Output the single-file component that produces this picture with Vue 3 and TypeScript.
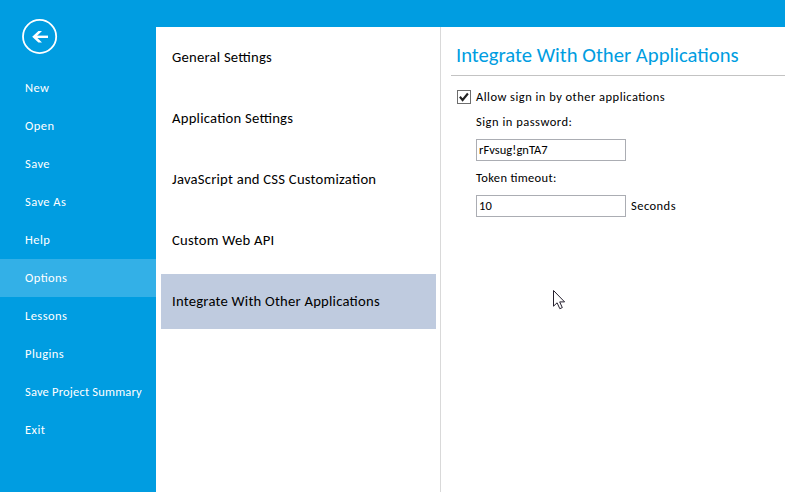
<script setup lang="ts">
import { ref } from 'vue'

const menu: string[] = ['New', 'Open', 'Save', 'Save As', 'Help', 'Options', 'Lessons', 'Plugins', 'Save Project Summary', 'Exit']
const sections: string[] = [
  'General Settings',
  'Application Settings',
  'JavaScript and CSS Customization',
  'Custom Web API',
  'Integrate With Other Applications',
]
const activeMenu = ref('Options')
const activeSection = ref('Integrate With Other Applications')
const allowSignIn = ref(true)
const password = ref('rFvsug!gnTA7')
const timeout = ref('10')
</script>

<template>
  <div class="window">
    <aside class="sidebar">
      <button class="back" aria-label="Back">
        <svg width="36" height="36" viewBox="0 0 36 36" fill="none" stroke="#fff">
          <circle cx="17.6" cy="17.5" r="16.6" stroke-width="1.8" />
          <path d="M26 17.8H12" stroke-width="2.4" />
          <path d="M10.2 17.8L16.4 12H20L14.2 17.8L20 23.6H16.4Z" fill="#fff" stroke="none" />
        </svg>
      </button>
      <nav>
        <a v-for="item in menu" :key="item" class="menu-item" :class="{ active: item === activeMenu, long: item.length > 12 }" @click="activeMenu = item"><span>{{ item }}</span></a>
      </nav>
    </aside>
    <main class="content">
      <nav class="sections">
        <a v-for="item in sections" :key="item" class="section" :class="{ active: item === activeSection }" @click="activeSection = item"><span>{{ item }}</span></a>
      </nav>
      <section class="panel">
        <h1><span>Integrate With Other Applications</span></h1>
        <div class="form">
          <label class="check-row">
            <input v-model="allowSignIn" class="native" type="checkbox" />
            <span class="box">
              <svg v-if="allowSignIn" width="12" height="12" viewBox="0 0 12 12"><path d="M1.9 5.8L4.6 9L9.9 2.5" fill="none" stroke="#222" stroke-width="2.1" /></svg>
            </span>
            <span class="label">Allow sign in by other applications</span>
          </label>
          <div class="fields">
            <label class="caption" for="password">Sign in password:</label>
            <input id="password" v-model="password" class="text" type="text" />
            <label class="caption timeout" for="timeout">Token timeout:</label>
            <div class="row">
              <input id="timeout" v-model="timeout" class="text number" type="text" />
              <span class="label">Seconds</span>
            </div>
          </div>
        </div>
      </section>
    </main>
    <svg class="cursor" width="14" height="21" viewBox="0 0 14 21">
      <path d="M0.5 0.5V16.2L4.1 12.8L6.8 18.7L9.3 17.6L6.7 11.9H11.6Z" fill="#fff" stroke="#25202e" stroke-width="1" />
    </svg>
  </div>
</template>

<style>
body { margin: 0; }
</style>

<style scoped>
* { box-sizing: border-box; }
.window {
  position: relative;
  display: flex;
  width: 785px;
  height: 492px;
  overflow: hidden;
  background: #009de1;
  color: #000;
  font-family: Carlito, Calibri, Lato, sans-serif;
  font-size: 12.5px;
  line-height: 15px;
  font-feature-settings: "liga" 1;
}
.sidebar { width: 156px; flex: none; padding-top: 19px; }
.back { display: block; width: 36px; height: 36px; margin: 0 0 14px 22px; padding: 0; border: 0; background: none; }
.back svg { display: block; }
.menu-item { display: flex; align-items: center; height: 38px; padding: 0 0 2px 25px; color: #fff; white-space: nowrap; letter-spacing: 0.44px; }
.menu-item.long { letter-spacing: 0.19px; }
.menu-item.active { background: #33b0e7; }
.content { flex: 1; display: flex; margin-top: 27px; background: #fff; }
.sections { display: flex; flex-direction: column; gap: 6px; width: 285px; flex: none; padding: 3px 4px 0 5px; border-right: 1px solid #d9d9d9; }
.section { display: flex; align-items: center; height: 55px; padding: 0 0 0 11px; font-size: 14.67px; line-height: 19px; white-space: nowrap; letter-spacing: 0.23px; }
.section.active { background: #bfcbdf; }
.panel { flex: 1; padding-left: 10px; }
h1 { display: flex; align-items: center; height: 49px; margin: 0; padding: 9px 0 0 5px; border-bottom: 1px solid #c3c3c3; color: #009de1; font-size: 20.66px; line-height: 25px; font-weight: 400; white-space: nowrap; }
.form { padding: 13px 0 0 6px; }
.check-row { display: flex; align-items: center; height: 16px; letter-spacing: 0.47px; }
.native { display: none; }
.box { display: flex; width: 14px; height: 14px; margin-right: 5px; border: 1px solid #6d6d6d; }
.box svg { display: block; }
.label { padding-bottom: 2px; }
.fields { padding-left: 19px; }
.caption { display: flex; align-items: center; height: 34px; padding-bottom: 2px; letter-spacing: 0.5px; }
.caption.timeout { letter-spacing: 0.33px; }
.text { display: block; width: 150px; height: 22px; margin: 0; padding: 0 2px 2px; border: 1px solid #abadb3; border-radius: 0; outline: 0; background: #fff; color: #000; font: inherit; letter-spacing: 0.04px; }
.row { display: flex; align-items: center; gap: 5px; letter-spacing: 0.46px; }
.cursor { position: absolute; left: 553px; top: 290px; }
</style>
